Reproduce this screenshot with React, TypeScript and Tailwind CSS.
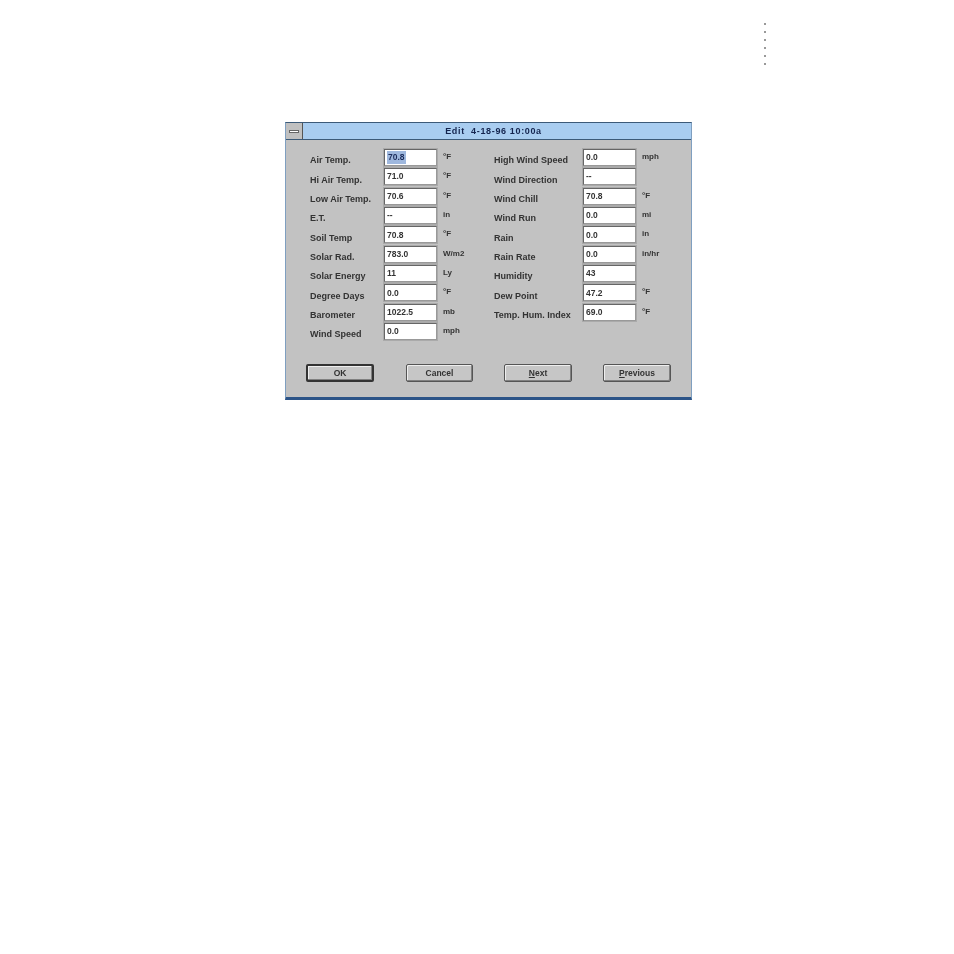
const leftRows = [
  { label: "Air Temp.", value: "70.8", unit: "°F", selected: true },
  { label: "Hi Air Temp.", value: "71.0", unit: "°F" },
  { label: "Low Air Temp.", value: "70.6", unit: "°F" },
  { label: "E.T.", value: "--", unit: "in" },
  { label: "Soil Temp", value: "70.8", unit: "°F" },
  { label: "Solar Rad.", value: "783.0", unit: "W/m2" },
  { label: "Solar Energy", value: "11", unit: "Ly" },
  { label: "Degree Days", value: "0.0", unit: "°F" },
  { label: "Barometer", value: "1022.5", unit: "mb" },
  { label: "Wind Speed", value: "0.0", unit: "mph" },
];

const rightRows = [
  { label: "High Wind Speed", value: "0.0", unit: "mph" },
  { label: "Wind Direction", value: "--", unit: "" },
  { label: "Wind Chill", value: "70.8", unit: "°F" },
  { label: "Wind Run", value: "0.0", unit: "mi" },
  { label: "Rain", value: "0.0", unit: "in" },
  { label: "Rain Rate", value: "0.0", unit: "in/hr" },
  { label: "Humidity", value: "43", unit: "" },
  { label: "Dew Point", value: "47.2", unit: "°F" },
  { label: "Temp. Hum. Index", value: "69.0", unit: "°F" },
];

type RowData = { label: string; value: string; unit: string; selected?: boolean };

const Row = ({ row, labelWidth }: { row: RowData; labelWidth: string }) => (
  <div className="flex h-[17px] items-center">
    <span className={`${labelWidth} whitespace-nowrap pt-[7px] text-[9px] font-bold text-[#333]`}>{row.label}</span>
    <div className="flex h-[17px] w-[53px] items-center border border-[#666] border-r-[#999] border-b-[#999] bg-white pl-[2px] text-[8.5px] font-bold text-[#333] shadow-[0_0_0_1px_#aaa]">
      <span className={row.selected ? "bg-[#9fb8de] px-[1px] text-[#1c2c5a]" : ""}>{row.value}</span>
    </div>
    <span className="ml-[6px] pb-[1px] text-[8px] font-bold text-[#333]">{row.unit}</span>
  </div>
);

const DialogButton = ({ label, width, isDefault, hotkey }: { label: string; width: string; isDefault?: boolean; hotkey?: boolean }) => (
  <div
    className={`flex h-[18px] ${width} items-center justify-center rounded-[2px] border bg-[#c6c6c6] text-[8.5px] font-bold text-[#333] shadow-[inset_-1px_-1px_0_#808080,inset_1px_1px_0_#eee] ${
      isDefault ? "border-[#333] border-2" : "border-[#555]"
    }`}
  >
    {hotkey ? (
      <span>
        <span className="underline">{label[0]}</span>
        {label.slice(1)}
      </span>
    ) : (
      label
    )}
  </div>
);

export default function App() {
  return (
    <div className="h-[954px] w-[954px] overflow-hidden bg-white font-['Liberation_Sans',sans-serif]">
      {/* margin dots */}
      <div className="ml-[764px] flex w-[2px] flex-col gap-[6px] pt-[23px]">
        {[0, 1, 2, 3, 4, 5].map((i) => (
          <div key={i} className="h-[2px] w-[2px] bg-[#999]" />
        ))}
      </div>

      {/* Dialog */}
      <div className="ml-[285px] mt-[57px] h-[278px] w-[407px] border border-t-[#3c5a78] border-l-[#7f9fc0] border-r-[#7f9fc0] border-b-[3px] border-b-[#2c5488] bg-[#c2c2c2] blur-[0.7px]">
        <div className="flex h-[17px] items-center border-b border-[#3c5a78] bg-[#a9cdf0]">
          <div className="flex h-[16px] w-[17px] items-center justify-center border-r border-[#555] bg-[#c0c0c0]">
            <div className="h-[3px] w-[10px] border border-[#666] bg-white" />
          </div>
          <div className="flex-1 pr-[7px] pt-[2px] text-center text-[9px] font-bold tracking-[0.65px] text-[#14244e]">
            Edit&nbsp; 4-18-96 10:00a
          </div>
        </div>

        <div className="flex pl-[24px] pt-[9px]">
          <div className="flex w-[184px] flex-col gap-[2.35px]">
            {leftRows.map((row) => (
              <Row key={row.label} row={row} labelWidth="w-[74px]" />
            ))}
          </div>
          <div className="flex flex-col gap-[2.35px]">
            {rightRows.map((row) => (
              <Row key={row.label} row={row} labelWidth="w-[89px]" />
            ))}
          </div>
        </div>

        <div className="flex pl-[20px] pt-[24px]">
          <DialogButton label="OK" width="w-[68px]" isDefault />
          <div className="ml-[32px]"><DialogButton label="Cancel" width="w-[67px]" /></div>
          <div className="ml-[31px]"><DialogButton label="Next" width="w-[68px]" hotkey /></div>
          <div className="ml-[31px]"><DialogButton label="Previous" width="w-[68px]" hotkey /></div>
        </div>
      </div>
    </div>
  );
}
